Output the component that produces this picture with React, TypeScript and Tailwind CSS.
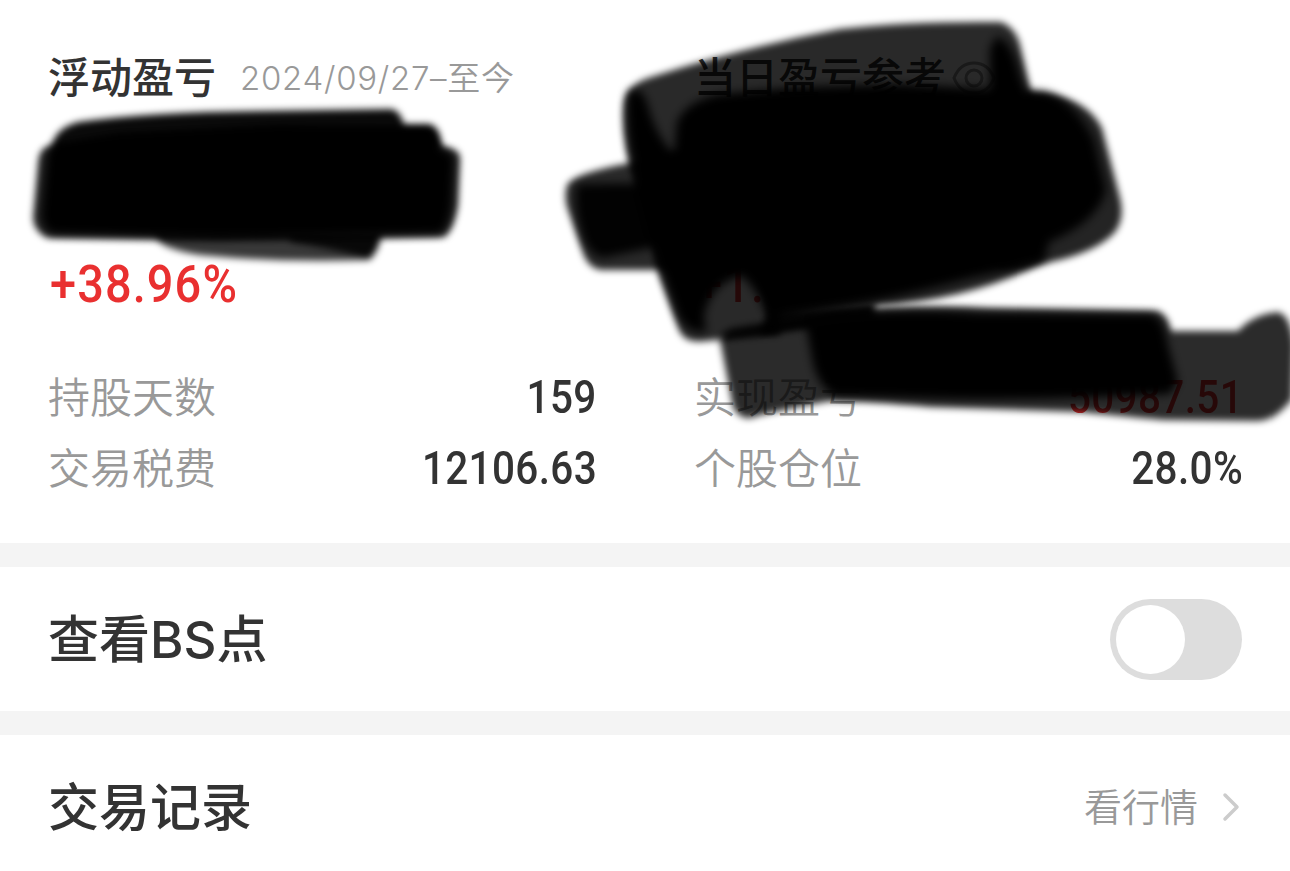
import type { ReactNode } from "react"

const cjk = "font-['Inter','Noto_Sans_CJK_SC',sans-serif]"
const num = "font-['Roboto','Liberation_Sans',sans-serif]"

function Stat({ label, value, red }: { label: string; value: string; red?: boolean }) {
  return (
    <div className="flex h-[71px] items-center justify-between">
      <span className="text-[42px] leading-none text-[#999999] font-[350]">{label}</span>
      <span
        className={`${num} -mr-px mb-0.5 origin-right scale-x-[0.88] text-[46px] leading-none font-medium tracking-[0.4px] ${
          red ? "text-[#e93030]" : "text-[#333333]"
        }`}
      >
        {value}
      </span>
    </div>
  )
}

function Percent({ value }: { value: string }) {
  return (
    <p
      className={`${num} ml-0.5 mt-[151px] origin-left scale-x-[0.92] text-[51px] leading-[56px] font-medium tracking-[1.2px] text-[#e93030]`}
    >
      {value}
    </p>
  )
}

function Row({ title, children }: { title: string; children: ReactNode }) {
  return (
    <div className="flex h-36 items-center justify-between px-12">
      <h2 className="text-[51px] leading-none font-medium text-[#333333]">{title}</h2>
      {children}
    </div>
  )
}

function Eye() {
  return (
    <svg width="44" height="36" viewBox="0 0 44 36" fill="none" stroke="#999" strokeWidth="3">
      <path d="M2 18C6 8 13 3 22 3s16 5 20 15c-4 10-11 15-20 15S6 28 2 18Z" />
      <circle cx="22" cy="18" r="8" />
    </svg>
  )
}

// Marker strokes that hide the private amounts
function Marker() {
  return (
    <svg
      className="pointer-events-none absolute left-0 top-0"
      width="1290"
      height="543"
      viewBox="0 0 1290 543"
    >
      <defs>
        <filter id="soft" x="-10%" y="-10%" width="120%" height="120%">
          <feGaussianBlur stdDeviation="3.5" />
        </filter>
        <filter id="softer" x="-10%" y="-10%" width="120%" height="120%">
          <feGaussianBlur stdDeviation="5" />
        </filter>
      </defs>

      <g filter="url(#soft)">
        <path
          d="M52 145Q56 128 78 122Q150 112 260 111L392 109Q400 111 404 124L430 124Q441 128 441 146L395 170L60 170Z"
          fillOpacity=".96"
        />
        <path d="M156 232L382 232Q379 252 369 260Q280 263 200 255Q162 249 156 238Z" fillOpacity=".78" />
        <path d="M290 235L381 235Q378 252 369 259Q335 249 290 242Z" fillOpacity=".85" />
        <path
          d="M50 146L120 134L280 126L430 126L442 147Q460 149 460 158L458 205Q454 230 444 237L220 240L48 238Q34 232 33 218L38 163Q39 148 50 146Z"
          fillOpacity=".85"
        />
      </g>
      <path
        filter="url(#softer)"
        d="M54 146L120 136L280 128L430 132L442 149Q454 151 454 160L452 205Q449 228 440 234L220 238L52 234Q42 229 41 216L46 163Q46 150 54 146Z"
      />

      <g filter="url(#soft)">
        <path
          d="M648 78Q740 48 840 29Q910 21 1001 22Q1017 28 1021 49L1035 110L780 190V335L705 341Q685 344 679 330L659 275L634 180Q620 135 624 102Q629 84 648 78Z"
          fillOpacity=".84"
        />
        <path
          d="M567 185Q574 173 630 163L690 150V270H601Q587 268 582 250L567 207Q564 196 567 185Z"
          fillOpacity=".84"
        />
        <path
          d="M1028 92Q1085 94 1102 128L1120 198Q1125 219 1115 232Q1096 253 1046 263L1000 268L990 240Z"
          fillOpacity=".86"
        />
        <path d="M760 265L870 250L1045 262Q970 300 880 305Q820 310 770 322Z" fillOpacity=".86" />
      </g>
      <g filter="url(#softer)">
        <path d="M997 36Q1013 42 1020 76L1038 120L990 110V48Z" />
        <path d="M628 92Q642 84 648 106Q656 136 674 154L677 122Q686 101 720 94L800 87L900 84L1045 92Q1074 100 1094 140L1106 190Q1098 222 1049 242L1044 262L970 278Q890 300 830 308L768 318Q758 290 742 276Q712 282 704 315L706 332Q684 334 676 310L660 266L640 190Q624 139 628 92Z" />
        <path d="M577 184L660 183V246L602 258Q590 254 584 240Q572 205 577 184Z" fillOpacity=".96" />
      </g>
      <path filter="url(#soft)" d="M768 312L875 302V320L760 335Z" fillOpacity=".95" />

      <g filter="url(#soft)">
        <path
          d="M721 345Q717 333 732 328L830 312Q920 304 990 308L1157 311Q1168 314 1171 331L1238 331Q1252 315 1277 312Q1290 313 1294 345L1292 399Q1275 421 1258 421L1163 420Q1110 415 1080 412L930 407Q870 401 830 401Q790 408 757 416Q741 423 733 407Z"
          fillOpacity=".83"
        />
        <path d="M721 338Q724 331 737 329L815 316L815 324Q760 333 724 339Z" fillOpacity=".7" />
      </g>
      <path
        filter="url(#softer)"
        d="M805 320Q880 306 980 313L1152 314Q1164 318 1168 345L1178 382L1170 394Q1060 400 960 399L835 396Q819 387 813 364Z"
      />
    </svg>
  )
}

export default function App() {
  return (
    <main className={`${cjk} relative w-[1290px] h-[871px] overflow-hidden bg-white text-[#333333]`}>
      <section className="h-[543px] pl-12 pr-12 pt-[50px]">
        <div className="grid grid-cols-2 gap-x-[98px]">
          <div>
            <div className="flex h-14 items-center gap-6">
              <h3 className="text-[42px] leading-none font-medium">浮动盈亏</h3>
              <span className="text-[33px] leading-none font-[350] tracking-[0.7px] text-[#999999]">
                2024/09/27–至今
              </span>
            </div>
            <Percent value="+38.96%" />
          </div>
          <div>
            <div className="flex h-14 items-center gap-1.5">
              <h3 className="text-[42px] leading-none font-medium">当日盈亏参考</h3>
              <Eye />
            </div>
            <Percent value="+1." />
          </div>
        </div>
        <div className="mt-[49px] grid grid-cols-2 gap-x-[98px]">
          <Stat label="持股天数" value="159" />
          <Stat label="实现盈亏" value="50987.51" red />
          <Stat label="交易税费" value="12106.63" />
          <Stat label="个股仓位" value="28.0%" />
        </div>
      </section>
      <div className="h-6 bg-[#f4f4f4]" />
      <Row title="查看BS点">
        <button className="flex h-[81px] w-[132px] items-center rounded-full bg-[#dddddd] p-1.5">
          <span className="size-[69px] rounded-full bg-white" />
        </button>
      </Row>
      <div className="h-6 bg-[#f4f4f4]" />
      <Row title="交易记录">
        <a className="flex items-center gap-6 text-[38px] leading-none font-[350] text-[#999999]">
          看行情
          <svg width="20" height="30" viewBox="0 0 20 30" fill="none" stroke="#cccccc" strokeWidth="3.5" strokeLinecap="round" strokeLinejoin="round">
            <path d="M3 3l12 12L3 27" />
          </svg>
        </a>
      </Row>
      <Marker />
    </main>
  )
}
